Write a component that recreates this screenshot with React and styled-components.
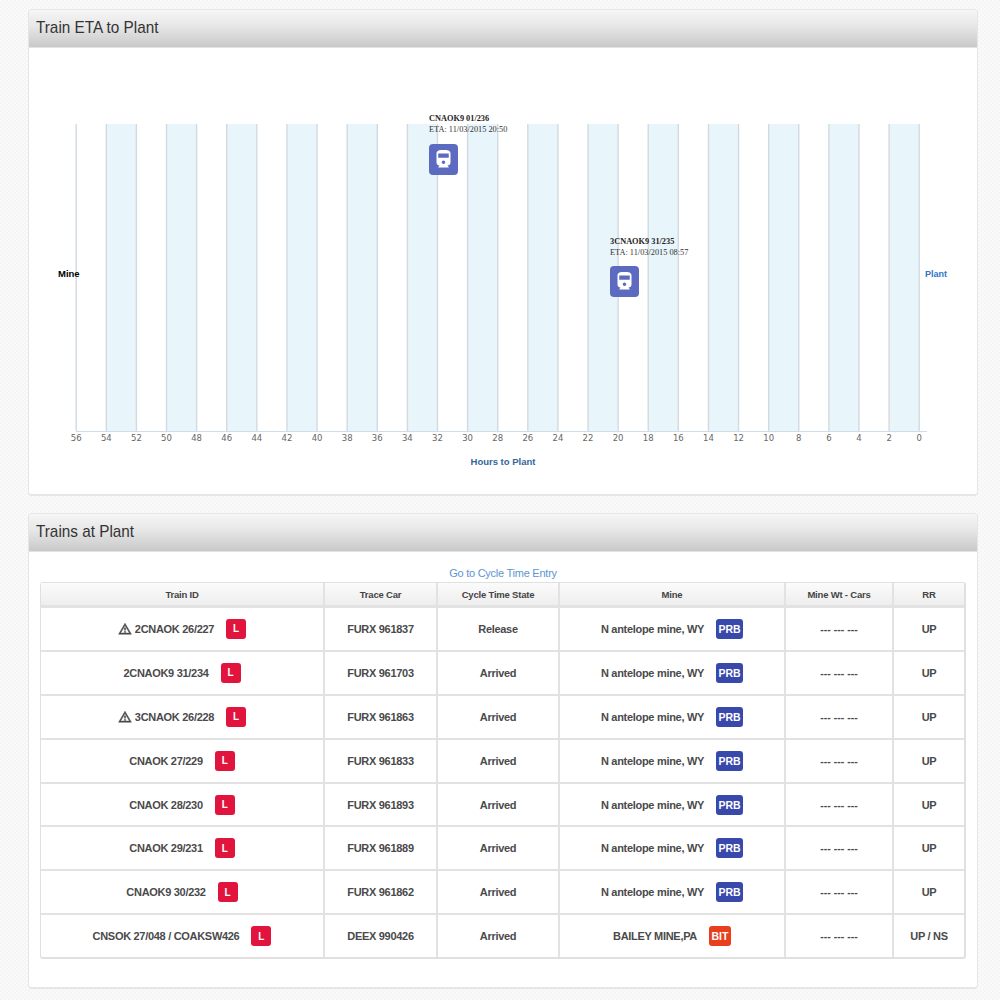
import React from "react";
import styled, { createGlobalStyle } from "styled-components";

const Global = createGlobalStyle`
  html, body { margin: 0; padding: 0; }
  body {
    font-family: "Liberation Sans", Arial, sans-serif;
    background-color: #f7f7f7;
    background-image: repeating-conic-gradient(#f5f5f5 0 25%, #fafafa 0 50%);
    background-size: 4px 4px;
  }
`;

const Page = styled.div`
  width: 1000px;
  height: 1000px;
  box-sizing: border-box;
  padding: 9px 22px 0 28px;
  display: flex;
  flex-direction: column;
  gap: 17px;
  overflow: hidden;
`;

const Panel = styled.section`
  background: #fff;
  border: 1px solid #e6e6e6;
  border-bottom-width: 2px;
  border-radius: 4px;
  box-sizing: border-box;
  height: ${(p) => p.$height}px;
  overflow: hidden;
`;

const PanelHead = styled.header`
  height: 38px;
  box-sizing: border-box;
  padding: 0 0 2px 7px;
  background: linear-gradient(to bottom, #f6f6f6 0%, #e6e6e6 45%, #c9c9c9 100%);
  border-bottom: 1px solid #e2e2e2;
  display: flex;
  align-items: center;
`;

const PanelTitle = styled.h2`
  margin: 0;
  font-size: 17px;
  font-weight: 400;
  color: #333;
  transform: scaleX(0.9);
  transform-origin: left center;
`;

const Chart = styled.div`
  position: relative;
  height: 447px;
`;

const ChartSvg = styled.svg`
  display: block;
  width: 947px;
  height: 447px;
`;

const Marker = styled.div`
  position: absolute;
  left: ${(p) => p.$x}px;
  top: ${(p) => p.$y}px;
  font-family: "Liberation Serif", "Times New Roman", serif;
  font-size: 8.3px;
  line-height: 11px;
  color: #333;
  white-space: nowrap;
`;

const MarkerName = styled.div`
  font-weight: 700;
  color: #222;
`;

const MarkerIcon = styled.div`
  width: 29px;
  height: 31px;
  margin-top: ${(p) => p.$gap}px;
  border-radius: 4px;
  background: #5c6bc0;
  display: flex;
  align-items: center;
  justify-content: center;
`;

const TableWrap = styled.div`
  padding: 13px 11px 0 11px;
`;

const CycleLink = styled.a`
  display: block;
  text-align: center;
  font-size: 11px;
  letter-spacing: -0.25px;
  line-height: 17px;
  color: #5b95d2;
  text-decoration: none;
`;

const Table = styled.table`
  border-collapse: separate;
  border-spacing: 0;
  table-layout: fixed;
  width: 925px;
  border: 1px solid #e0e0e0;
  border-bottom-width: 2px;
  border-right-width: 2px;
  border-radius: 3px;
`;

const Th = styled.th`
  height: 22px;
  padding: 0;
  font-size: 9.5px;
  letter-spacing: -0.2px;
  font-weight: 700;
  color: #444;
  background: linear-gradient(to bottom, #fbfbfb, #eeeeee);
  border-bottom: 3px solid #e2e2e2;
  border-right: 2px solid #e2e2e2;
  &:last-child { border-right: 0; }
`;

const Td = styled.td`
  height: 41.9px;
  padding: 0;
  text-align: center;
  font-size: 11px;
  letter-spacing: -0.3px;
  font-weight: 700;
  color: #4a4a4a;
  border-bottom: 2px solid #e2e2e2;
  border-right: 2px solid #e2e2e2;
  &:last-child { border-right: 0; }
  tr:last-child > & { border-bottom: 0; }
`;

const Cell = styled.span`
  display: inline-flex;
  align-items: center;
  justify-content: center;
  gap: 12px;
`;

const NameGroup = styled.span`
  display: inline-flex;
  align-items: center;
  gap: 3px;
`;

const Badge = styled.span`
  display: inline-flex;
  align-items: center;
  justify-content: center;
  width: ${(p) => p.$w}px;
  height: 20px;
  border-radius: 3px;
  background: ${(p) => p.$bg};
  color: #fff;
  font-size: ${(p) => (p.$w === 20 ? 10 : 10.5)}px;
  letter-spacing: 0;
  font-weight: 700;
`;

const Dashes = styled.span`
  font-size: 10.5px;
  letter-spacing: 0;
`;

const ticks = Array.from({ length: 29 }, (_, i) => 56 - i * 2);
const xOf = (h) => 76.2 + ((56 - h) * 843) / 56;

const TrainIcon = () => (
  <svg width="21" height="21" viewBox="0 0 24 24" aria-hidden="true">
    <path
      fill="#fff"
      d="M4 15.5C4 17.43 5.57 19 7.5 19L6 20.5v.5h12v-.5L16.5 19c1.93 0 3.5-1.57 3.5-3.5V5c0-3.5-3.58-4-8-4s-8 .5-8 4v10.5zm8 1.5c-1.1 0-2-.9-2-2s.9-2 2-2 2 .9 2 2-.9 2-2 2zm6-7H6V5h12v5z"
    />
  </svg>
);

const WarnIcon = () => (
  <svg width="14" height="14" viewBox="0 0 24 24" aria-hidden="true">
    <path
      fill="#4a4a4a"
      stroke="#4a4a4a"
      strokeWidth="0.8"
      d="M12 5.99L19.53 19H4.47L12 5.99M12 2L1 21h22L12 2zm1 14h-2v2h2v-2zm0-6h-2v4h2v-4z"
    />
  </svg>
);

const markers = [
  { name: "CNAOK9 01/236", eta: "ETA: 11/03/2015 20:50", x: 400, y: 65, gap: 9 },
  { name: "3CNAOK9 31/235", eta: "ETA: 11/03/2015 08:57", x: 581, y: 188, gap: 8 },
];

const headers = [
  ["Train ID", 284],
  ["Trace Car", 113],
  ["Cycle Time State", 122],
  ["Mine", 226],
  ["Mine Wt - Cars", 108],
  ["RR", 70],
];

const PRB = { label: "PRB", bg: "#3949ab", w: 27 };
const ant = "N antelope mine, WY";
const rows = [
  { warn: true, id: "2CNAOK 26/227", car: "FURX 961837", state: "Release", mine: ant, tag: PRB, rr: "UP" },
  { id: "2CNAOK9 31/234", car: "FURX 961703", state: "Arrived", mine: ant, tag: PRB, rr: "UP" },
  { warn: true, id: "3CNAOK 26/228", car: "FURX 961863", state: "Arrived", mine: ant, tag: PRB, rr: "UP" },
  { id: "CNAOK 27/229", car: "FURX 961833", state: "Arrived", mine: ant, tag: PRB, rr: "UP" },
  { id: "CNAOK 28/230", car: "FURX 961893", state: "Arrived", mine: ant, tag: PRB, rr: "UP" },
  { id: "CNAOK 29/231", car: "FURX 961889", state: "Arrived", mine: ant, tag: PRB, rr: "UP" },
  { id: "CNAOK9 30/232", car: "FURX 961862", state: "Arrived", mine: ant, tag: PRB, rr: "UP" },
  { id: "CNSOK 27/048 / COAKSW426", car: "DEEX 990426", state: "Arrived", mine: "BAILEY MINE,PA", tag: { label: "BIT", bg: "#e8401c", w: 22 }, rr: "UP / NS" },
];

export default function App() {
  return (
    <>
      <Global />
      <Page>
        <Panel $height={487}>
          <PanelHead>
            <PanelTitle>Train ETA to Plant</PanelTitle>
          </PanelHead>
          <Chart>
            <ChartSvg viewBox="29 48 947 447">
              {ticks.filter((h) => h % 4 === 2).map((h) => (
                <rect key={h} x={xOf(h)} y="124" width={xOf(h - 2) - xOf(h)} height="307" fill="#e8f5fb" />
              ))}
              {ticks.map((h) => (
                <line key={h} x1={xOf(h)} x2={xOf(h)} y1="124" y2="431" stroke="#d3dadf" strokeWidth="1.4" />
              ))}
              <line x1="76" x2="927" y1="431.5" y2="431.5" stroke="#cfdcea" strokeWidth="1" />
              {ticks.map((h) => (
                <text key={h} x={xOf(h)} y="441" textAnchor="middle" fontFamily="'DejaVu Sans', sans-serif" fontSize="8.5" fill="#666">
                  {h}
                </text>
              ))}
              <text x="58" y="277" fontFamily="'Liberation Sans', sans-serif" fontWeight="700" fontSize="9.5" fill="#000">Mine</text>
              <text x="925" y="277" fontFamily="'Liberation Sans', sans-serif" fontWeight="700" fontSize="9" fill="#2f74c6">Plant</text>
              <text x="503" y="465" textAnchor="middle" fontFamily="'Liberation Sans', sans-serif" fontWeight="700" fontSize="9.5" fill="#336699">Hours to Plant</text>
            </ChartSvg>
            {markers.map((m) => (
              <Marker key={m.name} $x={m.x} $y={m.y}>
                <MarkerName>{m.name}</MarkerName>
                <div>{m.eta}</div>
                <MarkerIcon $gap={m.gap}><TrainIcon /></MarkerIcon>
              </Marker>
            ))}
          </Chart>
        </Panel>
        <Panel $height={476}>
          <PanelHead>
            <PanelTitle>Trains at Plant</PanelTitle>
          </PanelHead>
          <TableWrap>
            <CycleLink href="#">Go to Cycle Time Entry</CycleLink>
            <Table>
              <colgroup>
                {headers.map(([h, w]) => <col key={h} width={w} />)}
              </colgroup>
              <thead>
                <tr>{headers.map(([h]) => <Th key={h}>{h}</Th>)}</tr>
              </thead>
              <tbody>
                {rows.map((r) => (
                  <tr key={r.id}>
                    <Td>
                      <Cell>
                        <NameGroup>
                          {r.warn && <WarnIcon />}
                          {r.id}
                        </NameGroup>
                        <Badge $w={20} $bg="#e0143c">L</Badge>
                      </Cell>
                    </Td>
                    <Td>{r.car}</Td>
                    <Td>{r.state}</Td>
                    <Td>
                      <Cell>
                        {r.mine}
                        <Badge $w={r.tag.w} $bg={r.tag.bg}>{r.tag.label}</Badge>
                      </Cell>
                    </Td>
                    <Td><Dashes>--- --- ---</Dashes></Td>
                    <Td>{r.rr}</Td>
                  </tr>
                ))}
              </tbody>
            </Table>
          </TableWrap>
        </Panel>
      </Page>
    </>
  );
}
